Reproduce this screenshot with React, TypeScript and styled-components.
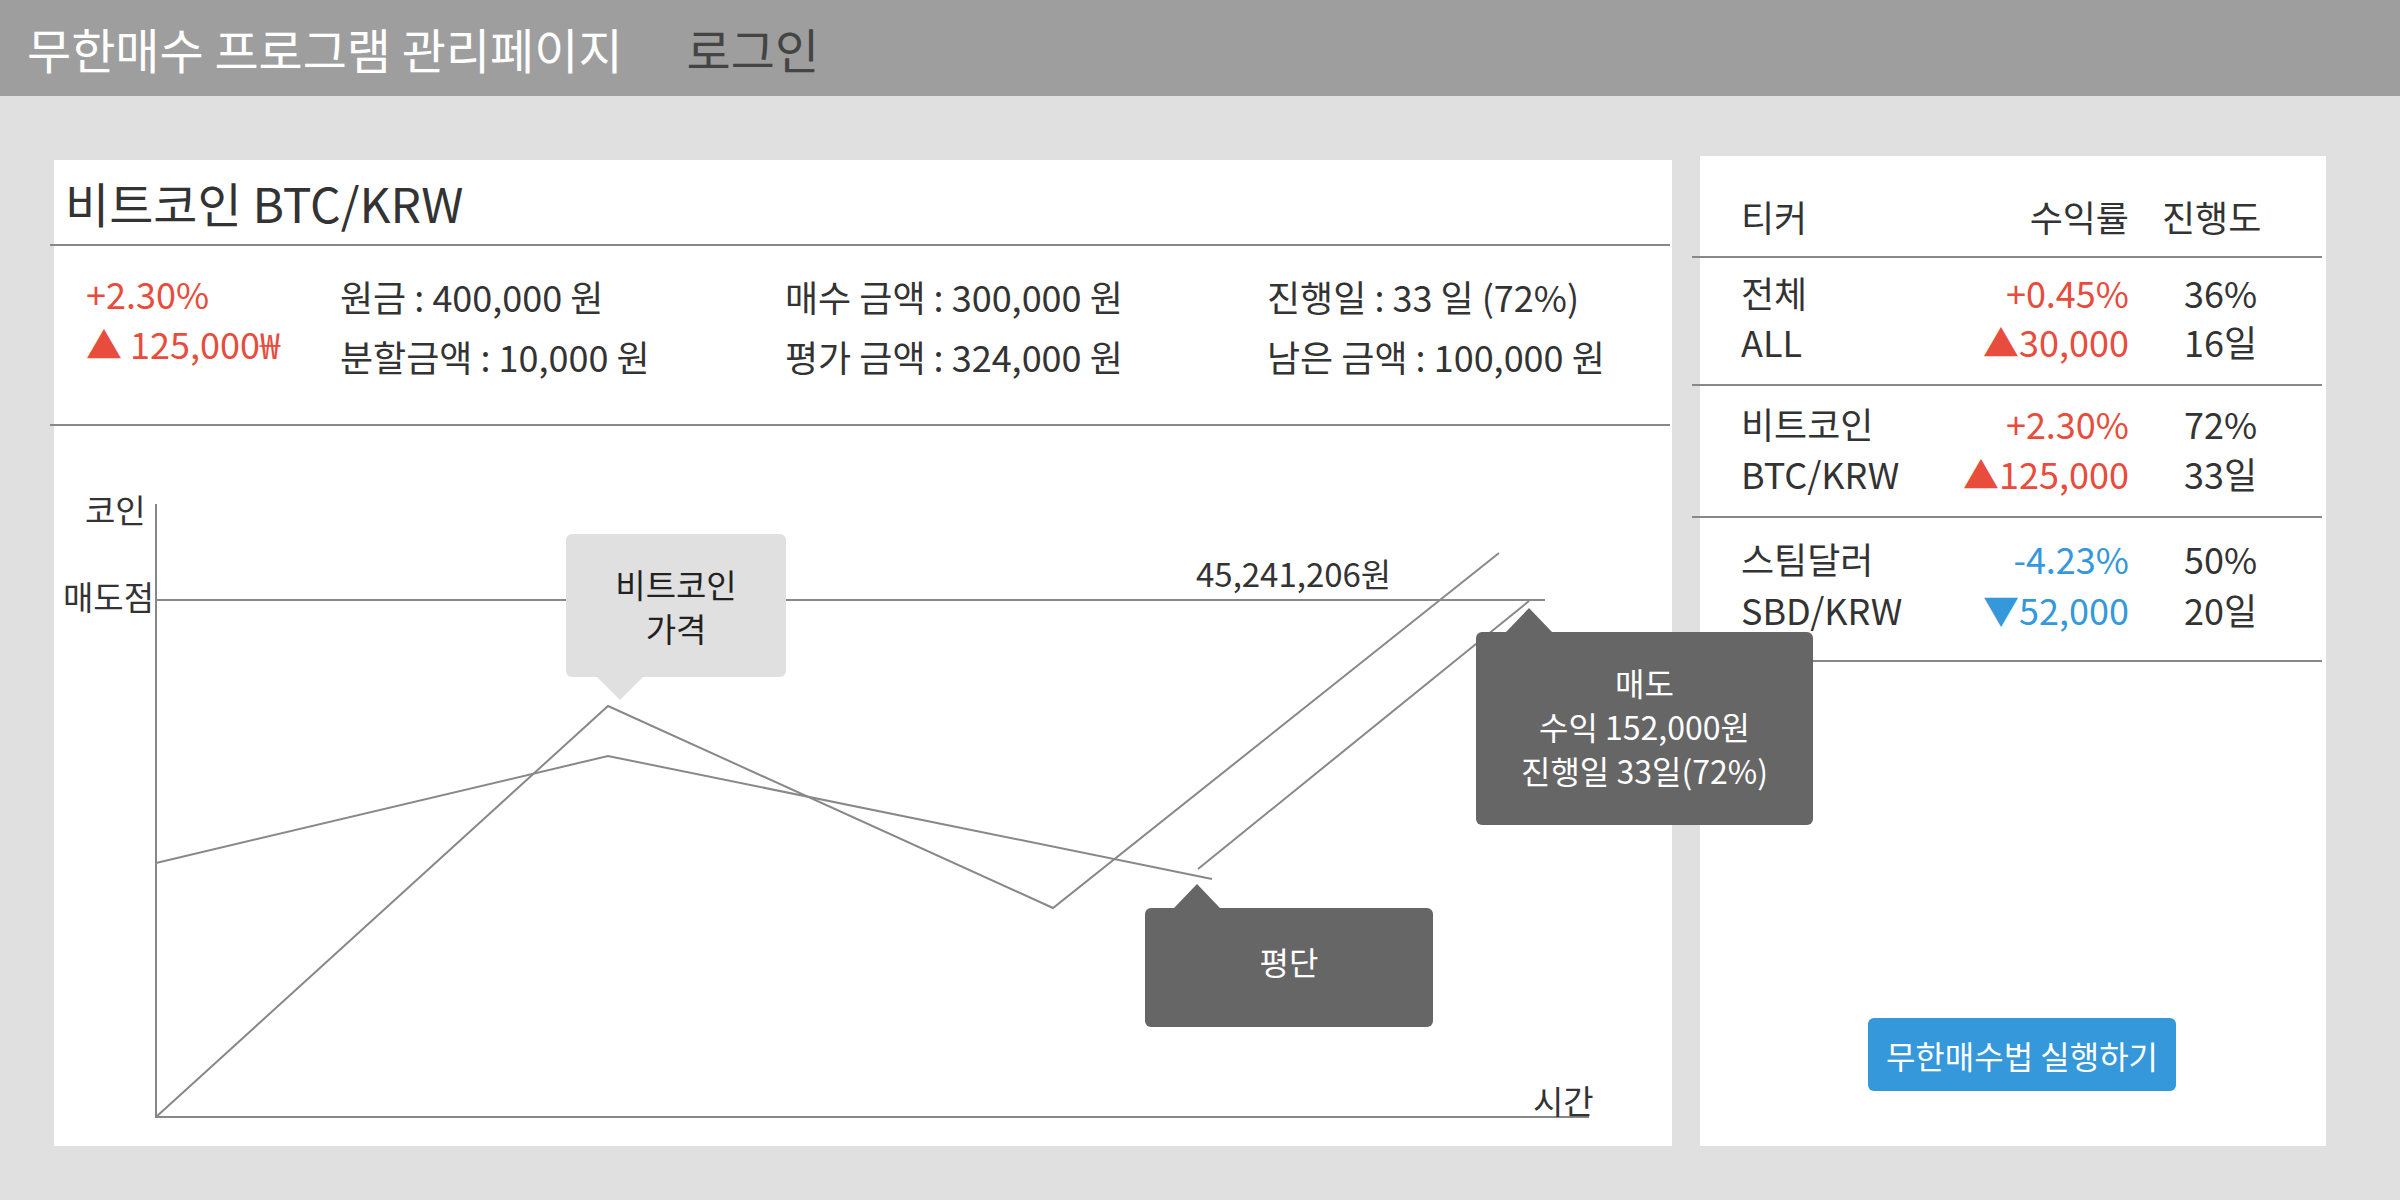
import React from "react";
import styled, { createGlobalStyle, css } from "styled-components";

const GlobalStyle = createGlobalStyle`
  html, body {
    margin: 0;
    padding: 0;
    background: #e0e0e0;
  }
  body {
    font-family: "Noto Sans CJK KR", "Noto Sans", sans-serif;
    color: #333;
  }
  #root {
    min-height: 1200px;
  }
`;

const RED = "#e74c3c";
const BLUE = "#3498db";

const info = [
  { color: RED, lh: 50, top: 22, lines: ["+2.30%", "▲ 125,000₩"] },
  { color: "#333", lh: 60, top: 20, lines: ["원금 : 400,000 원", "분할금액 : 10,000 원"] },
  { color: "#333", lh: 60, top: 20, lines: ["매수 금액 : 300,000 원", "평가 금액 : 324,000 원"] },
  { color: "#333", lh: 60, top: 20, lines: ["진행일 : 33 일 (72%)", "남은 금액 : 100,000 원"] },
];

const tickers = [
  { name: "전체", code: "ALL", rate: "+0.45%", diff: "▲30,000", up: true, pct: "36%", days: "16일", h: 126, top: 10, lh: 49 },
  { name: "비트코인", code: "BTC/KRW", rate: "+2.30%", diff: "▲125,000", up: true, pct: "72%", days: "33일", h: 130, top: 12, lh: 50 },
  { name: "스팀달러", code: "SBD/KRW", rate: "-4.23%", diff: "▼52,000", up: false, pct: "50%", days: "20일", h: 142, top: 15, lh: 51 },
];

export default function App() {
  return (
    <>
      <GlobalStyle />
      <Header>
        <Title>무한매수 프로그램 관리페이지</Title>
        <Login>로그인</Login>
      </Header>
      <Main>
        <CoinPanel>
          <CoinTitle>비트코인 BTC/KRW</CoinTitle>
          <Divider $left={-4} $right={2} />
          <InfoGrid>
            {info.map((col, i) => (
              <InfoCol key={i} $color={col.color} $lh={col.lh} $top={col.top}>
                {col.lines.map((l) => (
                  <div key={l}>{l}</div>
                ))}
              </InfoCol>
            ))}
          </InfoGrid>
          <Divider $left={-4} $right={2} />
          <Chart>
            <ChartSvg width="1618" height="720" viewBox="0 0 1618 720">
              <g stroke="#888" strokeWidth="2" fill="none">
                <line x1="102" y1="78" x2="102" y2="692" />
                <line x1="101" y1="691" x2="1535" y2="691" />
                <line x1="102" y1="174" x2="1491" y2="174" />
                <polyline points="102,691 554,280 999,482 1445,127" />
                <polyline points="102,437 554,330 1158,453" />
                <line x1="1144" y1="443" x2="1475" y2="175" />
              </g>
            </ChartSvg>
            <AxisLabel $x={31} $y={62}>코인</AxisLabel>
            <AxisLabel $x={9} $y={149}>매도점</AxisLabel>
            <AxisLabel $x={1142} $y={126}>45,241,206원</AxisLabel>
            <AxisLabel $x={1479} $y={653}>시간</AxisLabel>

            <Bubble $x={512} $y={108} $w={220} $h={143} $tip={54} $size={33} $down $light>
              <span>비트코인</span>
              <span>가격</span>
            </Bubble>
            <Bubble $x={1091} $y={482} $w={288} $h={119} $tip={52} $pb={14}>
              <span>평단</span>
            </Bubble>
            <Bubble $x={1422} $y={206} $w={337} $h={193} $tip={53} $pb={6}>
              <span>매도</span>
              <span>수익 152,000원</span>
              <span>진행일 33일(72%)</span>
            </Bubble>
          </Chart>
        </CoinPanel>

        <ListPanel>
          <HeadRow>
            <span>티커</span>
            <RateHead>수익률</RateHead>
            <ProgressHead>진행도</ProgressHead>
          </HeadRow>
          <Divider $left={-8} $right={4} />
          {tickers.map((t) => (
            <React.Fragment key={t.code}>
              <TickerRow $h={t.h} $top={t.top} $lh={t.lh}>
                <Cell>
                  <div>{t.name}</div>
                  <div>{t.code}</div>
                </Cell>
                <RateCell $color={t.up ? RED : BLUE}>
                  <div>{t.rate}</div>
                  <div>{t.diff}</div>
                </RateCell>
                <Cell>
                  <div>{t.pct}</div>
                  <div>{t.days}</div>
                </Cell>
              </TickerRow>
              <Divider $left={-8} $right={4} />
            </React.Fragment>
          ))}
          <RunButton>무한매수법 실행하기</RunButton>
        </ListPanel>
      </Main>
    </>
  );
}

const Header = styled.header`
  height: 96px;
  background: #9e9e9e;
  display: flex;
  align-items: center;
  padding-left: 27px;
  font-size: 48px;
`;

const Title = styled.div`
  color: #ffffff;
`;

const Login = styled.div`
  color: #444;
  margin-left: 64px;
`;

const Main = styled.main`
  display: flex;
  align-items: flex-end;
  gap: 28px;
  padding: 60px 74px 0 54px;
`;

const CoinPanel = styled.section`
  width: 1618px;
  height: 986px;
  background: #fff;
  display: flex;
  flex-direction: column;
`;

const CoinTitle = styled.div`
  height: 84px;
  display: flex;
  align-items: center;
  padding-left: 11px;
  font-size: 48px;
  color: #333;
`;

const Divider = styled.div<{ $left: number; $right: number }>`
  height: 2px;
  flex-shrink: 0;
  background: #888;
  margin-left: ${(p) => p.$left}px;
  margin-right: ${(p) => p.$right}px;
`;

const InfoGrid = styled.div`
  height: 178px;
  display: grid;
  grid-template-columns: 254px 445px 482px 1fr;
  padding-left: 32px;
  font-size: 36px;
`;

const InfoCol = styled.div<{ $color: string; $lh: number; $top: number }>`
  color: ${(p) => p.$color};
  line-height: ${(p) => p.$lh}px;
  padding-top: ${(p) => p.$top}px;
  white-space: nowrap;
`;

const Chart = styled.div`
  position: relative;
  flex: 1;
`;

const ChartSvg = styled.svg`
  display: block;
`;

const AxisLabel = styled.div<{ $x: number; $y: number }>`
  position: absolute;
  left: ${(p) => p.$x}px;
  top: ${(p) => p.$y}px;
  font-size: 33px;
  line-height: 42px;
  color: #333;
  white-space: nowrap;
`;

const Bubble = styled.div<{
  $x: number;
  $y: number;
  $w: number;
  $h: number;
  $tip: number;
  $size?: number;
  $pb?: number;
  $down?: boolean;
  $light?: boolean;
}>`
  position: absolute;
  z-index: 2;
  box-sizing: border-box;
  left: ${(p) => p.$x}px;
  top: ${(p) => p.$y}px;
  width: ${(p) => p.$w}px;
  height: ${(p) => p.$h}px;
  padding-bottom: ${(p) => p.$pb ?? 0}px;
  border-radius: 6px;
  background: ${(p) => (p.$light ? "#e0e0e0" : "#666")};
  color: ${(p) => (p.$light ? "#222" : "#fff")};
  display: flex;
  flex-direction: column;
  align-items: center;
  justify-content: center;
  font-size: ${(p) => p.$size ?? 32}px;
  line-height: 44px;
  white-space: nowrap;

  &::before {
    content: "";
    position: absolute;
    left: ${(p) => p.$tip - 23}px;
    border-left: 23px solid transparent;
    border-right: 23px solid transparent;
    ${(p) =>
      p.$down
        ? css`
            bottom: -23px;
            border-top: 23px solid ${p.$light ? "#e0e0e0" : "#666"};
          `
        : css`
            top: -24px;
            border-bottom: 24px solid ${p.$light ? "#e0e0e0" : "#666"};
          `}
  }
`;

const ListPanel = styled.aside`
  width: 626px;
  height: 990px;
  background: #fff;
  display: flex;
  flex-direction: column;
  font-size: 36px;
  color: #333;
`;

const rowGrid = css`
  display: grid;
  grid-template-columns: 145px 188px 1fr;
  column-gap: 55px;
  padding-left: 41px;
`;

const HeadRow = styled.div`
  ${rowGrid};
  height: 100px;
  box-sizing: border-box;
  padding-top: 40px;
  line-height: 40px;
`;

const RateHead = styled.span`
  text-align: right;
`;

const ProgressHead = styled.span`
  margin-left: -22px;
`;

const TickerRow = styled.div<{ $h: number; $top: number; $lh: number }>`
  ${rowGrid};
  height: ${(p) => p.$h}px;
  box-sizing: border-box;
  padding-top: ${(p) => p.$top}px;
  line-height: ${(p) => p.$lh}px;
`;

const Cell = styled.div`
  white-space: nowrap;
`;

const RateCell = styled(Cell)<{ $color: string }>`
  text-align: right;
  color: ${(p) => p.$color};
`;

const RunButton = styled.button`
  margin: auto 0 55px 168px;
  width: 308px;
  height: 73px;
  border: none;
  border-radius: 6px;
  background: ${BLUE};
  color: #fff;
  font-family: inherit;
  font-size: 32px;
  padding: 0;
  cursor: pointer;
`;
